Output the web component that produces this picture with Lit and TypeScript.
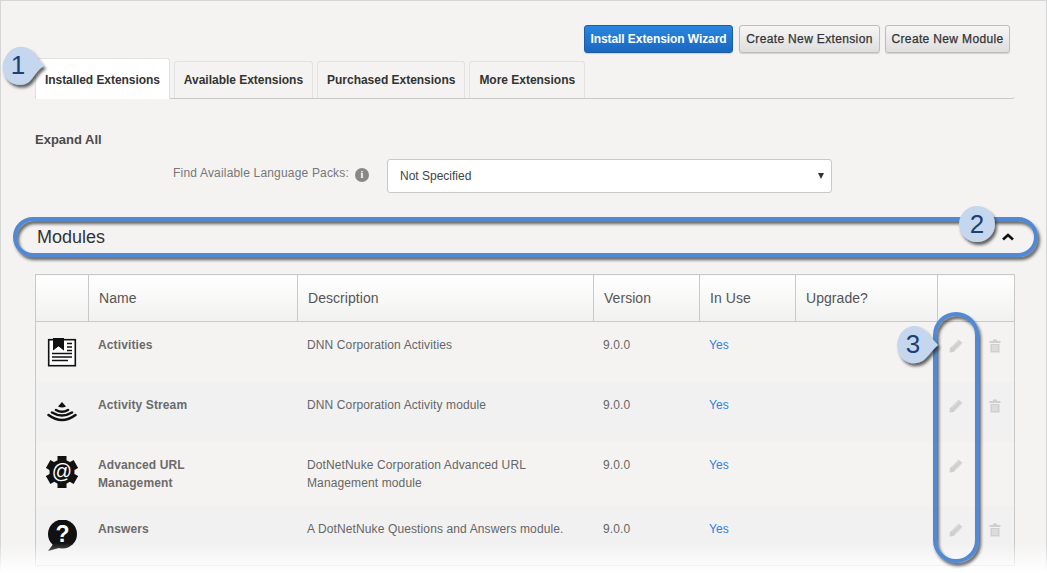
import { LitElement, css, html, svg } from "lit"
import { customElement } from "lit/decorators.js"

const activitiesIcon = svg`
  <rect x="2.700" y="3.700" width="26.600" height="26" fill="#fff" stroke="#111" stroke-width="1.600" />
  <path d="M7 2h11v13l-5.500-4.500L7 15z" fill="#111" />
  <path d="M6 15.500l6.500-5 6.500 5z" fill="#fff" />
  <path d="M21 7.500h5M21 11h5M21 14.500h5M6 17.500h20M6 21h20M6 24.500h16" stroke="#111" stroke-width="1.700" fill="none" />
`

const streamIcon = svg`
  <path d="M16 6l4 4.500q-4 2-8 0z" fill="#111" />
  <g fill="none" stroke="#111" stroke-width="2.600" stroke-linecap="round">
    <path d="M10 14q6 3.500 12 0" />
    <path d="M6 16.500q10 6 20 0" />
    <path d="M2.500 19q13.500 10 27 0" />
  </g>
`

const gearIcon = svg`
  <g fill="#111">
    <circle cx="16" cy="16" r="12.500" />
    <rect x="11.500" y="0" width="9" height="32" />
    <rect x="11.500" y="0" width="9" height="32" transform="rotate(60 16 16)" />
    <rect x="11.500" y="0" width="9" height="32" transform="rotate(120 16 16)" />
  </g>
  <text x="16" y="22" text-anchor="middle" font-family="Liberation Sans, sans-serif" font-size="20" fill="#fff">@</text>
`

const questionIcon = svg`
  <circle cx="16.500" cy="14" r="14.500" fill="#111" />
  <path d="M8 23l-6 8 11-3z" fill="#111" />
  <text x="16.500" y="22" text-anchor="middle" font-family="Liberation Sans, sans-serif" font-weight="700" font-size="23" fill="#fff">?</text>
`

const rows = [
  { name: "Activities", desc: "DNN Corporation Activities", icon: activitiesIcon, trash: true },
  { name: "Activity Stream", desc: "DNN Corporation Activity module", icon: streamIcon, trash: true },
  { name: "Advanced URL Management", desc: "DotNetNuke Corporation Advanced URL Management module", icon: gearIcon, trash: false },
  { name: "Answers", desc: "A DotNetNuke Questions and Answers module.", icon: questionIcon, trash: true },
]

@customElement("app-root")
export class AppRoot extends LitElement {
  render() {
    return html`
      <div class="page">
        <div class="actions">
          <button class="btn primary">Install Extension Wizard</button>
          <button class="btn ext">Create New Extension</button>
          <button class="btn mod">Create New Module</button>
        </div>
        <div class="tabs">
          <div class="tab active">Installed Extensions</div>
          <div class="tab">Available Extensions</div>
          <div class="tab">Purchased Extensions</div>
          <div class="tab">More Extensions</div>
        </div>
        <div class="expand">Expand All</div>
        <div class="lang">
          <span class="lang-label">Find Available Language Packs:</span>
          <span class="info">i</span>
          <div class="select">Not Specified<span class="caret"></span></div>
        </div>
        <div class="section">
          <span>Modules</span>
          <svg class="chevron" width="12" height="8" viewBox="0 0 12 8">
            <path d="M1 6.500L6 2l5 4.500" fill="none" stroke="#111" stroke-width="2.600" />
          </svg>
        </div>
        <table>
          <colgroup>
            <col style="width:53px" /><col style="width:209px" /><col style="width:296px" />
            <col style="width:106px" /><col style="width:96px" /><col style="width:142px" /><col style="width:77px" />
          </colgroup>
          <thead>
            <tr>
              <th></th><th>Name</th><th>Description</th><th>Version</th><th>In Use</th><th>Upgrade?</th><th></th>
            </tr>
          </thead>
          <tbody>
            ${rows.map(
              (r) => html`
                <tr>
                  <td class="icon"><svg width="32" height="32" viewBox="0 0 32 32">${r.icon}</svg></td>
                  <td class="name">${r.name}</td>
                  <td>${r.desc}</td>
                  <td>9.0.0</td>
                  <td class="yes">Yes</td>
                  <td></td>
                  <td class="ops">
                    <svg width="14" height="14" viewBox="0 0 14 14">
                      <path d="M9.800.5l3.700 3.700-8.800 8.800L.5 13.500l.5-4.200z" fill="#cfcfcf" />
                      <path d="M3 8.500l8-7.500M5.500 11l8-7.500" stroke="#e6e6e6" stroke-width=".7" />
                    </svg>
                    ${r.trash
                      ? html`<svg width="12" height="14" viewBox="0 0 12 14">
                          <path d="M4 .5h4v1.500h3.500v2H.5V2H4zM1.500 5h9v8.500h-9z" fill="#cfcfcf" />
                          <path d="M4 6v6M6 6v6M8 6v6" stroke="#efefef" stroke-width=".8" />
                        </svg>`
                      : ""}
                  </td>
                </tr>
              `
            )}
          </tbody>
        </table>
      </div>
      <div class="fade"></div>
      <svg class="notes" width="1047" height="573" viewBox="0 0 1047 573">
        <defs>
          <filter id="shadow" x="-10%" y="-10%" width="120%" height="120%">
            <feDropShadow dx="2" dy="3" stdDeviation="1.800" flood-color="#222" flood-opacity=".7" />
          </filter>
        </defs>
        <g filter="url(#shadow)" fill="none" stroke="#5189d5" stroke-width="4">
          <rect x="15" y="219" width="1021" height="36" rx="18" />
          <rect x="935" y="314" width="42" height="247" rx="21" />
        </g>
        <g filter="url(#shadow)" fill="#c5d7ee">
          <path d="M5 58C9 48 21 43 31 50L44 66C37 70 35 76 29 82C20 88 8 84 4 74C2 68 2 63 5 58z" />
          <circle cx="977" cy="224" r="18" />
          <path d="M901 333C908 324 921 323 928 334L938 345C933 349 930 354 925 359C916 367 904 363 900 355C896 348 896 340 901 333z" />
        </g>
        <g class="num">
          <text x="18" y="74">1</text>
          <text x="977" y="233">2</text>
          <text x="913" y="353">3</text>
        </g>
      </svg>
    `
  }

  static styles = css`
    :host {
      display: block;
      position: relative;
      width: 1047px;
      height: 573px;
      overflow: hidden;
      background: #fff;
      font-family: "Liberation Sans", Arial, sans-serif;
      font-size: 12px;
      color: #666;
    }
    .page {
      box-sizing: border-box;
      height: 573px;
      padding: 24px 31px 0 34px;
      background: #f4f3f2;
      border: 1px solid #d6d6d6;
      border-bottom: none;
    }
    .actions {
      display: flex;
      justify-content: flex-end;
      gap: 5px;
      padding-right: 5px;
      height: 28px;
    }
    .btn {
      box-sizing: border-box;
      height: 28px;
      padding: 0;
      border: 1px solid #bdbdbd;
      border-radius: 3px;
      background: linear-gradient(#f6f6f6, #dedede);
      box-shadow: 0 1px 1px rgba(0, 0, 0, 0.15);
      font: 12px "Liberation Sans", Arial, sans-serif;
      letter-spacing: 0.35px;
      -webkit-text-stroke: 0.25px;
      color: #333;
      white-space: nowrap;
    }
    .ext {
      width: 141px;
    }
    .mod {
      width: 125px;
    }
    .primary {
      width: 149px;
      margin-right: 1px;
      border-color: #1a5ea8;
      background: linear-gradient(#2a86e0, #1a67bf);
      color: #fff;
      font-weight: bold;
      letter-spacing: -0.08px;
      -webkit-text-stroke: 0;
    }
    .tabs {
      display: flex;
      align-items: flex-end;
      gap: 4px;
      height: 40px;
      margin-top: 5px;
      border-bottom: 1px solid #c9c9c9;
      border-bottom-right-radius: 3px;
    }
    .tab {
      box-sizing: border-box;
      height: 37px;
      padding: 11px 9px 0;
      border: 1px solid #e2e2e2;
      border-bottom: none;
      border-radius: 3px 3px 0 0;
      font-size: 12px;
      font-weight: bold;
      letter-spacing: -0.02px;
      color: #333;
      white-space: nowrap;
    }
    .active {
      height: 41px;
      margin-bottom: -1px;
      padding-top: 14px;
      letter-spacing: -0.06px;
      background: #fff;
    }
    .expand {
      margin-top: 33px;
      line-height: 16px;
      font-size: 13px;
      font-weight: bold;
      color: #4a4a4a;
    }
    .lang {
      display: flex;
      align-items: center;
      height: 34px;
      margin-top: 11px;
    }
    .lang-label {
      box-sizing: border-box;
      width: 314px;
      padding-bottom: 6px;
      text-align: right;
      letter-spacing: 0.18px;
      color: #777;
    }
    .info {
      width: 14px;
      height: 14px;
      margin: 0 18px 2px 6px;
      border-radius: 50%;
      background: #888;
      color: #fff;
      font: bold 10px/14px "Liberation Serif", serif;
      text-align: center;
    }
    .select {
      position: relative;
      box-sizing: border-box;
      width: 445px;
      height: 34px;
      padding: 0 12px;
      border: 1px solid #c9c9c9;
      border-radius: 3px;
      background: #fff;
      line-height: 32px;
      color: #444;
    }
    .caret {
      position: absolute;
      top: 13px;
      right: 7px;
      border: 3.500px solid transparent;
      border-top: 6px solid #333;
      border-bottom: none;
    }
    .section {
      display: flex;
      align-items: center;
      justify-content: space-between;
      height: 40px;
      margin-top: 24px;
      padding: 0 1px 0 2px;
      font-size: 18px;
      color: #333;
    }
    table {
      table-layout: fixed;
      width: 980px;
      margin-top: 17px;
      border-collapse: collapse;
      border: 1px solid #c9c9c9;
    }
    th {
      height: 46px;
      padding: 0 10px;
      border: 1px solid #c9c9c9;
      background: linear-gradient(#fff, #f1f1f0);
      text-align: left;
      font-size: 14px;
      letter-spacing: 0.05px;
      font-weight: normal;
      color: #555;
    }
    td {
      height: 60px;
      padding: 14px 10px 10px 9.5px;
      box-sizing: border-box;
      vertical-align: top;
      line-height: 18px;
      letter-spacing: 0.12px;
    }
    tbody tr:nth-child(even) {
      background: #f1f1f1;
    }
    tbody tr:nth-child(3) td {
      padding-bottom: 14px;
    }
    .name {
      font-weight: bold;
      padding-right: 80px;
      color: #6b6b6b;
    }
    .yes {
      color: #2f80e0;
    }
    td.icon {
      padding: 14px 0 0 10px;
    }
    td.icon svg {
      display: block;
    }
    td.ops {
      display: flex;
      gap: 26px;
      height: auto;
      padding: 17px 0 0 11px;
    }
    .fade {
      position: absolute;
      left: 0;
      right: 0;
      bottom: 0;
      height: 30px;
      background: linear-gradient(rgba(255, 255, 255, 0), #fff);
    }
    .notes {
      position: absolute;
      inset: 0;
    }
    .num text {
      font: 26px "Liberation Sans", Arial, sans-serif;
      fill: #1d3f73;
      text-anchor: middle;
    }
  `
}

declare global {
  interface HTMLElementTagNameMap {
    "app-root": AppRoot
  }
}
